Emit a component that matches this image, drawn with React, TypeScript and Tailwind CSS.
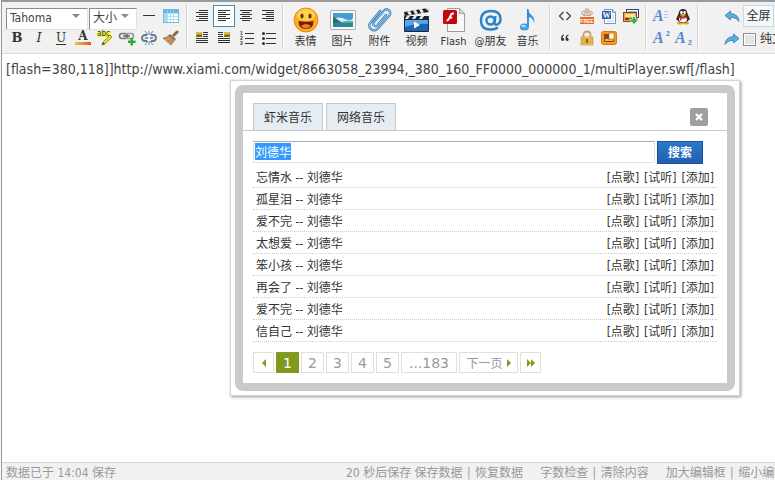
import { useEffect, useRef, useState } from "react";
import type { ReactNode } from "react";

const TAHOMA = "font-['DejaVu_Sans_Condensed','Noto_Sans','Noto_Sans_CJK_SC',sans-serif]";
const CELL = "flex h-[22px] w-[22px] shrink-0 items-center justify-center";

const SONGS = ["忘情水", "孤星泪", "爱不完", "太想爱", "笨小孩", "再会了", "爱不完", "信自己"];
const ACTIONS = ["点歌", "试听", "添加"];
const TABS = ["虾米音乐", "网络音乐"];
const PAGES = ["1", "2", "3", "4", "5"];

interface Tool {
  name: string;
  icon: ReactNode;
  active?: boolean;
}

function Lines({ rows }: { rows: Array<[number, number]> }) {
  return (
    <svg width="14" height="14" viewBox="0 0 14 14">
      {rows.map(([x, w], i) => (
        <rect key={i} x={x} y={1 + i * 2} width={w} height="1" fill="#333" />
      ))}
    </svg>
  );
}

function ImageLines({ side }: { side: "left" | "right" }) {
  const left = side === "left";
  return (
    <svg width="14" height="14" viewBox="0 0 14 14">
      <rect x={left ? 1 : 7} y="1" width="6" height="5" fill="#e2b93a" />
      <path d={left ? "M1 5l2-2 2 1 2-1v3H1z" : "M7 5l2-2 2 1 2-1v3H7z"} fill="#7a6420" />
      {[1, 3, 5].map((y) => (
        <rect key={y} x={left ? 8 : 1} y={y} width="5" height="1" fill="#333" />
      ))}
      {[7, 9, 11].map((y) => (
        <rect key={y} x="1" y={y} width="12" height="1" fill="#333" />
      ))}
    </svg>
  );
}

const FORMAT_TOOLS: Tool[] = [
  { name: "粗体", icon: <span className="font-['DejaVu_Serif','Liberation_Serif',serif] text-[13px] font-bold text-[#333]">B</span> },
  { name: "斜体", icon: <span className="font-['DejaVu_Serif','Liberation_Serif',serif] text-[13px] italic text-[#333]">I</span> },
  { name: "下划线", icon: <span className="font-['DejaVu_Serif','Liberation_Serif',serif] text-[12px] text-[#333] underline underline-offset-2">U</span> },
  {
    name: "字体颜色",
    icon: (
      <span className="flex flex-col items-center">
        <span className="font-['DejaVu_Serif','Liberation_Serif',serif] text-[12px] font-bold leading-[11px] text-[#333]">A</span>
        <span className="h-[3px] w-4 bg-linear-to-r from-[#f3bd49] to-[#d9562a]" />
      </span>
    ),
  },
  {
    name: "背景色",
    icon: (
      <svg width="18" height="18" viewBox="0 0 18 18">
        <rect x="1" y="2" width="14" height="6" fill="#f4f43e" />
        <text x="1" y="7" fontSize="8" fontFamily="DejaVu Sans Condensed, sans-serif" fill="#333">abc</text>
        <path d="M7 13l7-7 2 2-7 7-3 1z" fill="#e9dc2d" stroke="#8a831a" strokeWidth=".8" />
        <path d="M6 16l1-3 2 2z" fill="#4d4d2a" />
      </svg>
    ),
  },
  {
    name: "插入链接",
    icon: (
      <svg width="18" height="16" viewBox="0 0 18 16" fill="none">
        <rect x="1.5" y="3.5" width="8" height="5" rx="2.5" stroke="#777" strokeWidth="1.6" />
        <rect x="7.5" y="3.5" width="8" height="5" rx="2.5" stroke="#999" strokeWidth="1.6" />
        <path d="M5 6h7" stroke="#666" strokeWidth="1.4" />
        <path d="M12.500 8h2.500v2.500h2.500V13H15v2.500h-2.500V13H10v-2.500h2.500z" fill="#2ca83c" />
      </svg>
    ),
  },
  {
    name: "取消链接",
    icon: (
      <svg width="16" height="16" viewBox="0 0 16 16" fill="none">
        <path d="M6 5H4a3 3 0 0 0 0 6h2M10 5h2a3 3 0 0 1 0 6h-2" stroke="#697784" strokeWidth="1.8" />
        <path d="M4 8h3M9 8h3" stroke="#697784" strokeWidth="1.4" />
        <path d="M8 1v4M4 1l3 4M12 1L9 5M8 15v-4M4 15l3-4M12 15l-3-4" stroke="#4b93d4" strokeWidth="1" />
      </svg>
    ),
  },
  {
    name: "清除格式",
    icon: (
      <svg width="18" height="16" viewBox="0 0 18 16">
        <path d="M10 5l4-4q2-1 2.500.5T15.500 3.500L12 7z" fill="#9b6333" />
        <path d="M8 4l6 5-1.500 1.500-6-5z" fill="#70777c" />
        <path d="M6.500 5.500l6 5L9 15 1 8q4 0 5.500-2.500z" fill="#d6a05d" stroke="#8f5c28" strokeWidth=".7" />
        <path d="M4 9l3-2M6 11l3-2.500M8 13l2.500-3" stroke="#8f5c28" strokeWidth=".7" />
      </svg>
    ),
  },
];

const ALIGN_TOOLS: Tool[] = [
  { name: "两端对齐", icon: <Lines rows={[[4, 9], [1, 12], [4, 9], [1, 12], [4, 9], [1, 12]]} /> },
  { name: "左对齐", active: true, icon: <Lines rows={[[1, 12], [1, 8], [1, 12], [1, 8], [1, 12], [1, 8]]} /> },
  { name: "居中", icon: <Lines rows={[[1, 12], [3, 8], [1, 12], [3, 8], [1, 12], [3, 8]]} /> },
  { name: "右对齐", icon: <Lines rows={[[1, 12], [5, 8], [1, 12], [5, 8], [1, 12], [5, 8]]} /> },
  { name: "图片居左", icon: <ImageLines side="left" /> },
  { name: "图片居右", icon: <ImageLines side="right" /> },
  {
    name: "编号列表",
    icon: (
      <svg width="15" height="17" viewBox="0 0 15 17" fill="#333">
        <g fontSize="5" fontWeight="bold" fontFamily="Liberation Sans, sans-serif">
          <text x="1" y="5">1</text>
          <text x="1" y="10">2</text>
          <text x="1" y="15">3</text>
        </g>
        <path d="M6 3h9v1H6zM6 8h9v1H6zM6 13h9v1H6z" />
      </svg>
    ),
  },
  {
    name: "项目列表",
    icon: (
      <svg width="15" height="15" viewBox="0 0 15 15" fill="#333">
        <circle cx="2.500" cy="2.500" r="1.500" />
        <circle cx="2.500" cy="7.500" r="1.500" />
        <circle cx="2.500" cy="12.500" r="1.500" />
        <path d="M5 2h10v1H5zM5 7h10v1H5zM5 12h10v1H5z" />
      </svg>
    ),
  },
];

const INSERT_TOOLS: Tool[] = [
  {
    name: "表情",
    icon: (
      <svg width="26" height="26" viewBox="0 0 26 26">
        <circle cx="13" cy="13" r="12" fill="#fcae21" stroke="#e78a12" />
        <ellipse cx="13" cy="8" rx="9" ry="6" fill="#ffdb58" opacity=".8" />
        <ellipse cx="9" cy="9" rx="1.600" ry="2.500" fill="#623009" />
        <ellipse cx="17" cy="9" rx="1.600" ry="2.500" fill="#623009" />
        <path d="M5.500 14q7.500 1.500 15 0q0 8-7.500 8t-7.500-8z" fill="#6f1d05" />
        <path d="M8 19q5-4 10 0q-5 5-10 0z" fill="#ee7a2c" />
      </svg>
    ),
  },
  {
    name: "图片",
    icon: (
      <svg width="26" height="22" viewBox="0 0 26 22">
        <rect x=".5" y="1.500" width="25" height="19" rx="1.500" fill="#fafafa" stroke="#a9b0b2" />
        <rect x="3" y="4" width="20" height="14" fill="#4b9bd6" />
        <path d="M3 10q6-3 12 0t8-1v4H3z" fill="#d5eef7" />
        <path d="M3 8q3 1 5 3l5 3H3z" fill="#257260" />
        <path d="M3 14q11-2 20-1v5H3z" fill="#2c82a7" />
        <path d="M12 13q6-2 11-1v2H12z" fill="#63ae8b" />
      </svg>
    ),
  },
  {
    name: "附件",
    icon: (
      <svg width="24" height="26" viewBox="0 0 24 26" fill="none" strokeLinecap="round">
        <path d="M18 8L9.500 18q-2 2-3.500.5t0-3.500L15.500 4q3-3 5.500-.5t0 5.500L10 21.500q-3.500 3.500-7 .5t0-7L12 4" stroke="#3b82bd" strokeWidth="2.400" />
        <path d="M18 8L9.500 18q-2 2-3.500.5t0-3.500L15.500 4q3-3 5.500-.5t0 5.500L10 21.500q-3.500 3.500-7 .5t0-7L12 4" stroke="#a9d5f3" strokeWidth=".9" />
      </svg>
    ),
  },
  {
    name: "视频",
    icon: (
      <svg width="27" height="26" viewBox="0 0 27 26">
        <path d="M1 5l24-4 .7 4L1.700 9z" fill="#222" />
        <path d="M4 4.500l3-.5 2 3.500-3 .5zM10 3.500l3-.5 2 3.500-3 .5zM16 2.500l3-.5 2 3.500-3 .5zM22 1.500l3-.5.7 3z" fill="#eee" />
        <rect x="1" y="9" width="25" height="16" rx="1" fill="#16283c" />
        <path d="M4 9h3l-2 3H2zM11 9h3l-2 3H9zM18 9h3l-2 3h-3z" fill="#eee" />
        <rect x="2" y="13" width="23" height="11" fill="#1f62ad" />
        <path d="M2 13h23v4q-12-1-23 3z" fill="#5ba6e6" />
        <path d="M11 14.500l6 3.500-6 3.500z" fill="#fff" />
      </svg>
    ),
  },
  {
    name: "Flash",
    icon: (
      <svg width="24" height="26" viewBox="0 0 24 26">
        <path d="M5.500 1.500h12l5 5v18h-17z" fill="#f8f8f8" stroke="#9e9e9e" />
        <path d="M17.500 1.500v5h5z" fill="#ddd" stroke="#9e9e9e" />
        <rect x="1" y="3" width="14" height="14" rx="1.500" fill="#c3090d" />
        <path d="M12 5.500q-3.500-.5-4.500 3T4.500 13v1.500q2.500 0 3.800-3h2v-1.800H9q1-2.400 3-2.400z" fill="#fff" />
      </svg>
    ),
  },
  {
    name: "@朋友",
    icon: (
      <svg width="26" height="26" viewBox="0 0 26 26" fill="none" stroke="#2b83c7">
        <circle cx="12.500" cy="13.500" r="4" strokeWidth="2.400" />
        <path d="M17.500 9l-1 7q0 2 2 1.800 4-1 4-5.800 0-8-9.500-8Q3 4 3 13.500t10 9q4 0 7-2" strokeWidth="2.400" />
      </svg>
    ),
  },
  {
    name: "音乐",
    icon: (
      <svg width="20" height="26" viewBox="0 0 20 26">
        <defs>
          <linearGradient id="note" x1="0" y1="0" x2="1" y2="1">
            <stop offset="0" stopColor="#2b7fd6" />
            <stop offset="1" stopColor="#4fb0f2" />
          </linearGradient>
        </defs>
        <ellipse cx="6.500" cy="20" rx="4.500" ry="3.500" fill="url(#note)" />
        <path d="M9 20V2h1.500q0 4 3.500 6.500T16 17q0-5-5-7v10z" fill="url(#note)" />
        <ellipse cx="5.500" cy="19" rx="2.500" ry="1.500" fill="#a5d8fa" />
      </svg>
    ),
  },
];

const EXTRA_TOOLS: Tool[] = [
  {
    name: "代码",
    icon: (
      <svg width="14" height="12" viewBox="0 0 14 12" fill="none" stroke="#444" strokeWidth="1.300">
        <path d="M5.500 2L1.500 6l4 4M8.500 2l4 4-4 4" />
      </svg>
    ),
  },
  {
    name: "免费信息",
    icon: (
      <svg width="16" height="17" viewBox="0 0 16 17">
        <g fill="none" stroke="#c4ad96" strokeWidth="1.200">
          <circle cx="8" cy="2.500" r="1.700" />
          <circle cx="4.500" cy="5" r="1.700" />
          <circle cx="11.500" cy="5" r="1.700" />
          <path d="M8 2v6M4 7.500h8" />
        </g>
        <rect x="1" y="9" width="14" height="7" fill="#e76a24" />
        <text x="8" y="15" textAnchor="middle" fontSize="5" fontWeight="bold" fontFamily="Liberation Sans, sans-serif" fill="#fff">FREE</text>
      </svg>
    ),
  },
  {
    name: "Word",
    icon: (
      <svg width="16" height="17" viewBox="0 0 16 17">
        <path d="M3.500 1.500h8l3 3v11h-11z" fill="#fff" stroke="#6c97c5" />
        <path d="M11.500 1.500v3h3" fill="none" stroke="#6c97c5" />
        <path d="M11 8h2M11 10h2M6 13h7" fill="none" stroke="#a9c3de" />
        <rect x="1" y="3" width="9" height="8" fill="#2d62a8" />
        <text x="5.500" y="10" textAnchor="middle" fontSize="8" fontWeight="bold" fontFamily="Liberation Serif, serif" fill="#fff">W</text>
      </svg>
    ),
  },
  {
    name: "下载图片",
    icon: (
      <svg width="18" height="17" viewBox="0 0 18 17">
        <rect x="4.500" y="1.500" width="12" height="8" fill="#fff" stroke="#2e3e7e" />
        <path d="M6 3h9v2H6z" fill="#7db4e6" />
        <rect x="1.500" y="4.500" width="13" height="9" fill="#ef9f32" stroke="#a53e28" />
        <path d="M3 6h10v3H3z" fill="#ffe09a" />
        <path d="M3 10h10v2H3z" fill="#6a4318" />
        <path d="M10.500 8.500h3V11H17l-5 5.500L7 11h3.500z" fill="#35b543" stroke="#fff" strokeWidth=".6" />
      </svg>
    ),
  },
  {
    name: "引用",
    icon: (
      <svg width="10" height="8" viewBox="0 0 10 8" fill="#333">
        <path d="M4 .5Q1 1 1 4.500 1 7 2.700 7t1.500-1.700T2.500 3.700Q2.500 2 4 1.500zM8.500.5q-3 .5-3 4Q5.500 7 7.200 7t1.500-1.700T7 3.700Q7 2 8.500 1.500z" />
      </svg>
    ),
  },
  {
    name: "隐藏内容",
    icon: (
      <svg width="14" height="16" viewBox="0 0 14 16">
        <path d="M3.500 8V5q0-3.500 3.500-3.500T10.500 5v3" fill="none" stroke="#c2a566" strokeWidth="1.800" />
        <rect x="1" y="7" width="12" height="8" fill="#f0c662" stroke="#c48d2c" strokeWidth=".6" />
        <path d="M1 9h12M1 11h12M1 13h12" stroke="#c48d2c" strokeWidth=".7" />
        <path d="M6 9h2v4H6z" fill="#8f6318" />
      </svg>
    ),
  },
  {
    name: "附件集",
    icon: (
      <svg width="16" height="14" viewBox="0 0 16 14">
        <rect x=".5" y=".5" width="15" height="13" rx="2" fill="#f29c27" stroke="#d9790c" />
        <rect x="3" y="3" width="10" height="8" fill="#8a4a0c" />
        <path d="M4 8h8v2H4z" fill="#f9b650" />
        <path d="M8 2h5v7l-2.500-1.500L8 9z" fill="#fffbe8" stroke="#b45c08" strokeWidth=".7" />
      </svg>
    ),
  },
];

function BlueA({ mark }: { mark?: "sup" | "sub" }) {
  return (
    <svg width="20" height="20" viewBox="0 0 20 20" fill="#5489d0">
      <text x="2" y="15" fontSize="16" fontWeight="bold" fontStyle="italic" fontFamily="Liberation Serif, serif">A</text>
      {mark && (
        <text x="15" y={mark === "sup" ? 8 : 17} fontSize="7" fontWeight="bold" fontFamily="Liberation Sans, sans-serif">2</text>
      )}
      {!mark && <path d="M13 5h4v1h-4zM13 8h4v1h-4zM13 11h4v1h-4z" opacity=".4" />}
    </svg>
  );
}

const TEXT_TOOLS: Tool[] = [
  { name: "文字样式", icon: <BlueA /> },
  {
    name: "QQ",
    icon: (
      <svg width="16" height="17" viewBox="0 0 16 17">
        <ellipse cx="5" cy="15" rx="3" ry="1.500" fill="#eaa11b" />
        <ellipse cx="11" cy="15" rx="3" ry="1.500" fill="#eaa11b" />
        <path d="M8 1q4 0 4.500 5l2 4q.5 3-1 2Q12 15 8 15t-5.500-3q-1.500 1-1-2l2-4Q4 1 8 1z" fill="#262626" />
        <ellipse cx="8" cy="11.500" rx="4" ry="3" fill="#fff" />
        <ellipse cx="6.400" cy="4.500" rx="1.300" ry="1.700" fill="#fff" />
        <ellipse cx="9.600" cy="4.500" rx="1.300" ry="1.700" fill="#fff" />
        <path d="M3.500 8q4.500 2 9 0v1.500q-3 1.500-6 1v2H5v-2.500l-1.500-.5z" fill="#dc251c" />
        <ellipse cx="8" cy="7" rx="3" ry="1" fill="#f3a41c" />
      </svg>
    ),
  },
  { name: "上标", icon: <BlueA mark="sup" /> },
  { name: "下标", icon: <BlueA mark="sub" /> },
];

function HistoryArrow({ redo }: { redo?: boolean }) {
  return (
    <svg width="16" height="13" viewBox="0 0 16 13">
      <path
        d={redo ? "M9.500 1L15 5.500 9.500 10V7.500Q4 7 1 11.500 1.500 4 9.500 3.500z" : "M6.500 1L1 5.500 6.500 10V7.500Q12 7 15 11.500 14.500 4 6.500 3.500z"}
        fill="#5aaee0"
        stroke="#3585b9"
        strokeWidth=".9"
      />
    </svg>
  );
}

function ToolGrid({ tools, cols }: { tools: Tool[]; cols: string }) {
  return (
    <div className={`grid shrink-0 content-start ${cols}`}>
      {tools.map((t) => (
        <button
          key={t.name}
          type="button"
          aria-label={t.name}
          className={`${CELL} ${t.active ? "border border-[#3a8fc0] bg-white" : ""}`}
        >
          {t.icon}
        </button>
      ))}
    </div>
  );
}

function Separator() {
  return <div className="mx-[3px] w-[2px] shrink-0 border-l border-[#d5d5d5] bg-white" />;
}

function FontSelect({ label, value, width }: { label: string; value: string; width: string }) {
  return (
    <div className={`relative h-[22px] ${width}`}>
      <select
        aria-label={label}
        defaultValue={value}
        className="h-full w-full appearance-none border border-[#e2e2e2] border-t-[#8c8c8c] border-l-[#8c8c8c] bg-white pb-1 pl-[3px] text-[12px] text-[#444] outline-none"
      >
        <option>{value}</option>
      </select>
      <svg className="pointer-events-none absolute top-[9px] right-[8px]" width="8" height="4" viewBox="0 0 8 4">
        <path d="M0 0h8L4 4z" fill="#888" />
      </svg>
    </div>
  );
}

function Toolbar() {
  return (
    <div className="flex h-[54px] shrink-0 overflow-hidden border-t-2 border-b border-t-[#999] border-b-[#ddd] bg-[#f1f1f1] py-[3px] pl-1">
      <div className="shrink-0 pr-px">
        <div className="flex">
          <FontSelect label="字体" value="Tahoma" width="mr-px w-[82px]" />
          <FontSelect label="字号" value="大小" width="mr-px w-[48px]" />
          <button type="button" aria-label="分隔线" className={CELL}>
            <svg width="12" height="12" viewBox="0 0 12 12"><rect y="5" width="12" height="1" fill="#333" /></svg>
          </button>
          <button type="button" aria-label="表格" className={CELL}>
            <svg width="16" height="16" viewBox="0 0 16 16">
              <rect x=".5" y="1.500" width="15" height="13" fill="#fff" stroke="#72b9df" />
              <rect x="1" y="2" width="14" height="3" fill="#61b6e4" />
              <rect x="1" y="5" width="3" height="9" fill="#a9d8f0" />
              <path d="M4.500 2v12M7.500 2v12M10.500 2v12M1 5.500h14M1 8.500h14M1 11.500h14" stroke="#a6d5ed" strokeWidth=".8" />
            </svg>
          </button>
        </div>
        <ToolGrid tools={FORMAT_TOOLS} cols="grid-cols-[repeat(8,22px)]" />
      </div>
      <Separator />
      <ToolGrid tools={ALIGN_TOOLS} cols="grid-cols-[repeat(4,22px)]" />
      <Separator />
      <div className="flex shrink-0">
        {INSERT_TOOLS.map((t) => (
          <button key={t.name} type="button" className="flex w-[37px] flex-col items-center text-[11px] leading-[15px] whitespace-nowrap text-[#333]">
            <span className="flex h-[29px] items-center pt-px">{t.icon}</span>
            {t.name}
          </button>
        ))}
      </div>
      <Separator />
      <ToolGrid tools={EXTRA_TOOLS} cols="grid-cols-[repeat(4,22px)]" />
      <Separator />
      <ToolGrid tools={TEXT_TOOLS} cols="grid-cols-[repeat(2,22px)]" />
      <Separator />
      <div className="ml-[19px] shrink-0 text-[12px] text-[#333]">
        <div className="flex h-[22px]">
          <button type="button" aria-label="撤销" className={CELL}><HistoryArrow /></button>
          <button type="button" className="h-[22px] w-[31px] border border-[#c3d9e5] bg-[#f4f8fa] whitespace-nowrap">全屏</button>
        </div>
        <div className="flex h-[24px] items-center">
          <button type="button" aria-label="重做" className={CELL}><HistoryArrow redo /></button>
          <label className="flex items-center gap-1 whitespace-nowrap">
            <input type="checkbox" className="h-[13px] w-[13px] appearance-none border border-[#8e8f8f] bg-[#e4e4e4] shadow-[inset_0_0_0_1px_#fff]" />
            纯文本
          </label>
        </div>
      </div>
    </div>
  );
}

const PAGE_BOX = "flex h-[21px] items-center justify-center border border-[#e0e0d8] whitespace-nowrap";

function Pager() {
  const [page, setPage] = useState("1");
  return (
    <div className="mt-[10px] flex gap-[2px] font-['DejaVu_Sans','Noto_Sans_CJK_SC',sans-serif] text-[14px] text-[#999]">
      <button type="button" aria-label="上一页" className={`${PAGE_BOX} w-[21px]`}>
        <svg width="4" height="8" viewBox="0 0 4 8"><path d="M4 0v8L0 4z" fill="#7f9a1c" /></svg>
      </button>
      {PAGES.map((p) => (
        <button
          key={p}
          type="button"
          onClick={() => setPage(p)}
          className={p === page ? "h-[21px] w-[23px] bg-[#7f9a1c] leading-[22px] text-white" : `${PAGE_BOX} w-[23px] pt-px`}
        >
          {p}
        </button>
      ))}
      <button type="button" className={`${PAGE_BOX} w-[56px] pt-px`}>...183</button>
      <button type="button" className={`${PAGE_BOX} w-[59px] gap-1 text-[12px]`}>
        <span className="pt-[2px]">下一页</span>
        <svg width="4" height="8" viewBox="0 0 4 8"><path d="M0 0v8l4-4z" fill="#7f9a1c" /></svg>
      </button>
      <button type="button" aria-label="末页" className={`${PAGE_BOX} w-[21px]`}>
        <svg width="8" height="8" viewBox="0 0 8 8"><path d="M0 0v8l4-4zM4 0v8l4-4z" fill="#7f9a1c" /></svg>
      </button>
    </div>
  );
}

function MusicDialog() {
  const searchRef = useRef<HTMLInputElement>(null);

  useEffect(() => {
    searchRef.current?.focus();
    searchRef.current?.select();
  }, []);

  return (
    <div
      role="dialog"
      aria-label="插入音乐"
      className="absolute top-[26px] left-[228px] w-[510px] border border-[#d4d4d4] bg-white p-1 text-[12px] text-[#333] shadow-[1px_1px_3px_#999]"
    >
      <div className="rounded-lg border-8 border-[#c9c9c9]">
        <div className="flex items-end gap-[3px] border-b border-[#c9c9c9] bg-white px-[10px] pt-[10px]">
          {TABS.map((tab) => (
            <button key={tab} type="button" className="h-[27px] w-[70px] border border-b-0 border-[#c3c9cd] bg-[#e5edf2] pt-[2px]">
              {tab}
            </button>
          ))}
          <button
            type="button"
            aria-label="关闭"
            className="mr-[9px] mb-1 ml-auto flex h-[18px] w-[18px] items-center justify-center rounded-xs bg-[#9f9f9f]"
          >
            <svg width="8" height="8" viewBox="0 0 8 8"><path d="M1 1l6 6M7 1L1 7" stroke="#fff" strokeWidth="2.200" /></svg>
          </button>
        </div>
        <div className="bg-white p-[10px]">
          <form className="flex items-start gap-[2px]" onSubmit={(e) => e.preventDefault()}>
            <input
              ref={searchRef}
              type="text"
              aria-label="搜索音乐"
              defaultValue="刘德华"
              className="h-[22px] w-[402px] border border-[#dde3ea] border-t-[#abadb3] px-px pb-[2px] outline-none selection:bg-[#3399ff] selection:text-white"
            />
            <button type="submit" className="h-[23px] w-[46px] border border-[#1c5091] bg-linear-to-b from-[#2b78cf] to-[#2360ae] font-bold text-white">
              搜索
            </button>
          </form>
          <ul className="mt-[2px]">
            {SONGS.map((song, i) => (
              <li key={i} className="flex h-[22px] items-center justify-between border-b border-dotted border-[#ccc] px-[3px] pt-[2px]">
                <span>{song} -- 刘德华</span>
                <span className="flex gap-[5px]">
                  {ACTIONS.map((a) => (
                    <a key={a} href="#">[{a}]</a>
                  ))}
                </span>
              </li>
            ))}
          </ul>
          <Pager />
        </div>
      </div>
    </div>
  );
}

function Bar() {
  return <span className="mx-px"> | </span>;
}

function StatusBar() {
  return (
    <div className="flex h-[18px] shrink-0 items-center overflow-hidden border-t border-[#d5d5d5] bg-[#f1f1f1] pt-[2px] pl-1 text-[12px] whitespace-nowrap text-[#999]">
      <span className="w-[340px] shrink-0">数据已于 14:04 保存</span>
      <span className="flex shrink-0 gap-[17px]">
        <span>20 秒后保存 <a href="#">保存数据</a><Bar /><a href="#">恢复数据</a></span>
        <span><a href="#">字数检查</a><Bar /><a href="#">清除内容</a></span>
        <span><a href="#">加大编辑框</a><Bar /><a href="#">缩小编辑框</a></span>
      </span>
    </div>
  );
}

export default function App() {
  return (
    <div className="h-screen overflow-hidden bg-[#f8f8f8] pl-px">
      <div className={`flex h-full flex-col border-l border-[#999] ${TAHOMA}`}>
        <Toolbar />
        <div className="relative min-h-0 flex-1 bg-white">
          <textarea
            aria-label="正文"
            defaultValue="[flash=380,118]]http://www.xiami.com/widget/8663058_23994,_380_160_FF0000_000000_1/multiPlayer.swf[/flash]"
            className="block h-full w-full resize-none px-1 py-[5px] text-[14px] leading-5 text-[#444] outline-none"
          />
          <MusicDialog />
        </div>
        <StatusBar />
      </div>
    </div>
  );
}
